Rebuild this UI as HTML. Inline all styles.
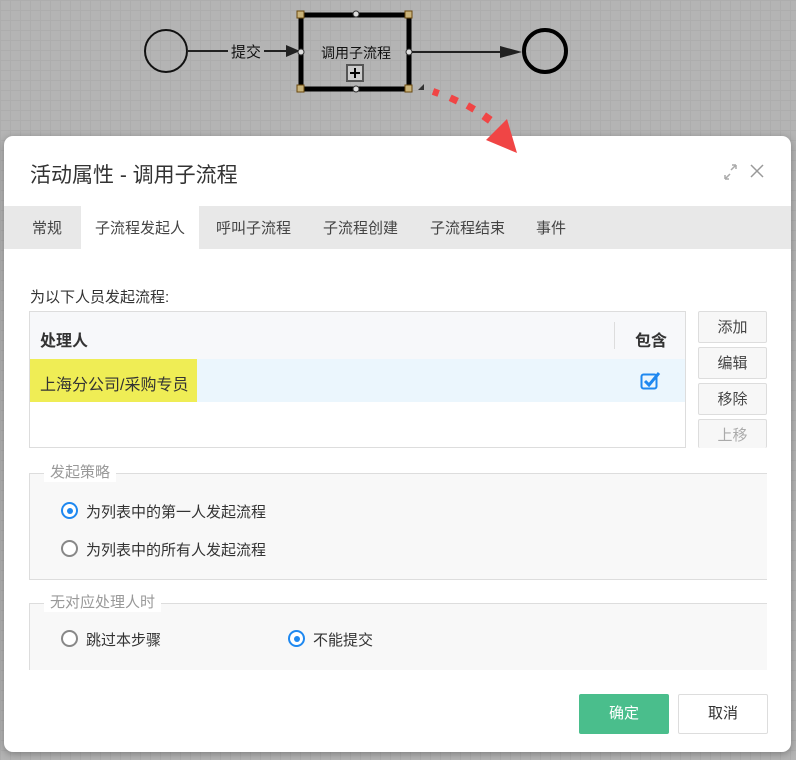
<!DOCTYPE html>
<html><head><meta charset="utf-8"><style>
*{box-sizing:border-box;margin:0;padding:0}
body{width:796px;height:760px;overflow:hidden;font-family:"Liberation Sans","Noto Sans CJK SC",sans-serif;position:relative;
background-image:linear-gradient(#adadad 1px,transparent 1px),linear-gradient(90deg,#adadad 1px,transparent 1px);background-size:10px 10px;background-color:#b4b4b4}
.a{position:absolute}
.dlg{position:absolute;left:4px;top:136px;width:787px;height:616px;background:#fff;border-radius:9px;box-shadow:0 2px 8px rgba(0,0,0,.3)}
.tabs{position:absolute;left:0;top:70px;width:787px;height:43px;background:#e8e8e8}
.tab{position:absolute;top:0;height:43px;line-height:46px;font-size:15px;color:#444}
.btn{position:absolute;left:694px;width:69px;height:32px;border:1px solid #ddd;background:#f7f7f7;font-size:15px;color:#444;text-align:center;line-height:31px;border-radius:2px}
.fs{position:absolute;left:25px;width:738px;background:#f8f8f8;border:1px solid #ddd;border-right:none}
.lg{position:absolute;top:-10px;left:14px;background:#fff;padding:0 6px;font-size:15px;color:#999;line-height:18px}
.r{position:absolute;width:17px;height:17px;border-radius:50%;border:2px solid #888;background:#fff}
.r.on{border-color:#1e88f0}
.r.on:after{content:"";position:absolute;left:3.5px;top:3.5px;width:6px;height:6px;border-radius:50%;background:#1e88f0}
.rt{position:absolute;font-size:15px;color:#333}
</style></head><body>
<svg class="a" style="left:0;top:0" width="796" height="160">
<circle cx="166" cy="51" r="21" fill="none" stroke="#111" stroke-width="2"/>
<line x1="187" y1="51" x2="292" y2="51" stroke="#222" stroke-width="2"/>
<polygon points="286,45 300,51 286,57" fill="#222"/>
<rect x="228" y="42" width="36" height="18" fill="#b4b4b4"/>
<text x="246" y="57" font-size="15" text-anchor="middle" font-family="Noto Sans CJK SC" fill="#111">提交</text>
<rect x="301" y="15" width="108" height="74" rx="4" fill="none" stroke="#000" stroke-width="5"/>
<text x="356" y="58" font-size="14" text-anchor="middle" font-family="Noto Sans CJK SC" fill="#111">调用子流程</text>
<rect x="347" y="65" width="16" height="16" fill="#ccc" stroke="#555" stroke-width="2"/>
<path d="M355 68v10M350 73h10" stroke="#000" stroke-width="2"/>
<g fill="#c9b37a" stroke="#6a4a10" stroke-width="1"><rect x="297" y="11" width="7" height="7"/><rect x="405" y="11" width="7" height="7"/><rect x="297" y="85" width="7" height="7"/><rect x="405" y="85" width="7" height="7"/></g>
<g fill="#ddd" stroke="#333"><circle cx="356" cy="14" r="3"/><circle cx="356" cy="89" r="3"/><circle cx="301" cy="52" r="3"/><circle cx="409" cy="52" r="3"/></g>
<polygon points="418,90 424,84 424,90" fill="#333"/>
<line x1="412" y1="52" x2="510" y2="52" stroke="#222" stroke-width="2"/>
<polygon points="500,46 522,52 500,58" fill="#222"/>
<circle cx="545" cy="51" r="21" fill="none" stroke="#000" stroke-width="4"/>
</svg>
<div class="dlg">
<div class="a" style="left:26px;top:23px;font-size:21px;color:#333">活动属性 - 调用子流程</div>
<svg class="a" style="left:718px;top:27px" width="48" height="18"><path d="M3 16l5-5M3 16v-4M3 16h4M14 2l-5 5M14 2v4M14 2h-4" stroke="#aaa" stroke-width="1.5" fill="none"/><path d="M29 2l12 12M41 2L29 14" stroke="#999" stroke-width="1.5"/></svg>
<div class="tabs">
<div class="tab" style="left:28px">常规</div>
<div class="tab" style="left:77px;width:118px;background:#fff;text-align:center">子流程发起人</div>
<div class="tab" style="left:212px">呼叫子流程</div>
<div class="tab" style="left:319px">子流程创建</div>
<div class="tab" style="left:426px">子流程结束</div>
<div class="tab" style="left:532px">事件</div>
</div>
<div class="a" style="left:26px;top:150px;font-size:15px;color:#333">为以下人员发起流程:</div>
<div class="a" style="left:25px;top:175px;width:657px;height:137px;border:1px solid #ddd;background:#fff">
<div class="a" style="left:0;top:0;width:655px;height:47px;background:#f7f8fa"></div>
<div class="a" style="left:10px;top:15px;font-size:16px;color:#333;font-weight:bold">处理人</div>
<div class="a" style="left:584px;top:10px;width:1px;height:27px;background:#ddd"></div>
<div class="a" style="left:605px;top:15px;font-size:16px;color:#333;font-weight:bold">包含</div>
<div class="a" style="left:0;top:47px;width:655px;height:43px;background:#ebf6fd"></div>
<div class="a" style="left:0;top:47px;width:167px;height:43px;background:#efed55"></div>
<div class="a" style="left:10px;top:59px;font-size:16px;color:#333">上海分公司/采购专员</div>
<svg class="a" style="left:610px;top:59px" width="22" height="20"><rect x="1.5" y="3.5" width="15" height="14" rx="2" fill="none" stroke="#1e88f0" stroke-width="2"/><path d="M5 10l4 4 10-12" stroke="#1e88f0" stroke-width="3" fill="none"/></svg>
</div>
<div class="btn" style="top:175px">添加</div>
<div class="btn" style="top:211px">编辑</div>
<div class="btn" style="top:247px">移除</div>
<div class="btn" style="top:283px;height:29px;color:#aaa;border-bottom:none">上移</div>
<div class="fs" style="top:337px;height:107px"><div class="lg">发起策略</div>
<div class="r on" style="left:31px;top:28px"></div><div class="rt" style="left:56px;top:27px">为列表中的第一人发起流程</div>
<div class="r" style="left:31px;top:66px"></div><div class="rt" style="left:56px;top:65px">为列表中的所有人发起流程</div>
</div>
<div class="fs" style="top:467px;height:67px;border-bottom:none"><div class="lg">无对应处理人时</div>
<div class="r" style="left:31px;top:26px"></div><div class="rt" style="left:56px;top:25px">跳过本步骤</div>
<div class="r on" style="left:258px;top:26px"></div><div class="rt" style="left:283px;top:25px">不能提交</div>
</div>
<div class="a" style="left:575px;top:558px;width:90px;height:40px;background:#4abe8c;border-radius:2px;color:#fff;font-size:15px;text-align:center;line-height:40px">确定</div>
<div class="a" style="left:674px;top:558px;width:90px;height:40px;border:1px solid #ddd;background:#fff;border-radius:2px;color:#333;font-size:15px;text-align:center;line-height:38px">取消</div>
</div>
<svg class="a" style="left:0;top:0" width="796" height="160">
<g fill="#f04545"><rect x="433" y="89" width="6" height="7" transform="rotate(20 436 92)"/><rect x="450" y="96" width="8" height="7" transform="rotate(25 454 99)"/><rect x="467" y="104" width="8" height="7" transform="rotate(30 471 107)"/><rect x="483" y="114" width="8" height="8" transform="rotate(35 487 118)"/>
<polygon points="486,140 507,119 517,153"/></g>
</svg>
</body></html>
